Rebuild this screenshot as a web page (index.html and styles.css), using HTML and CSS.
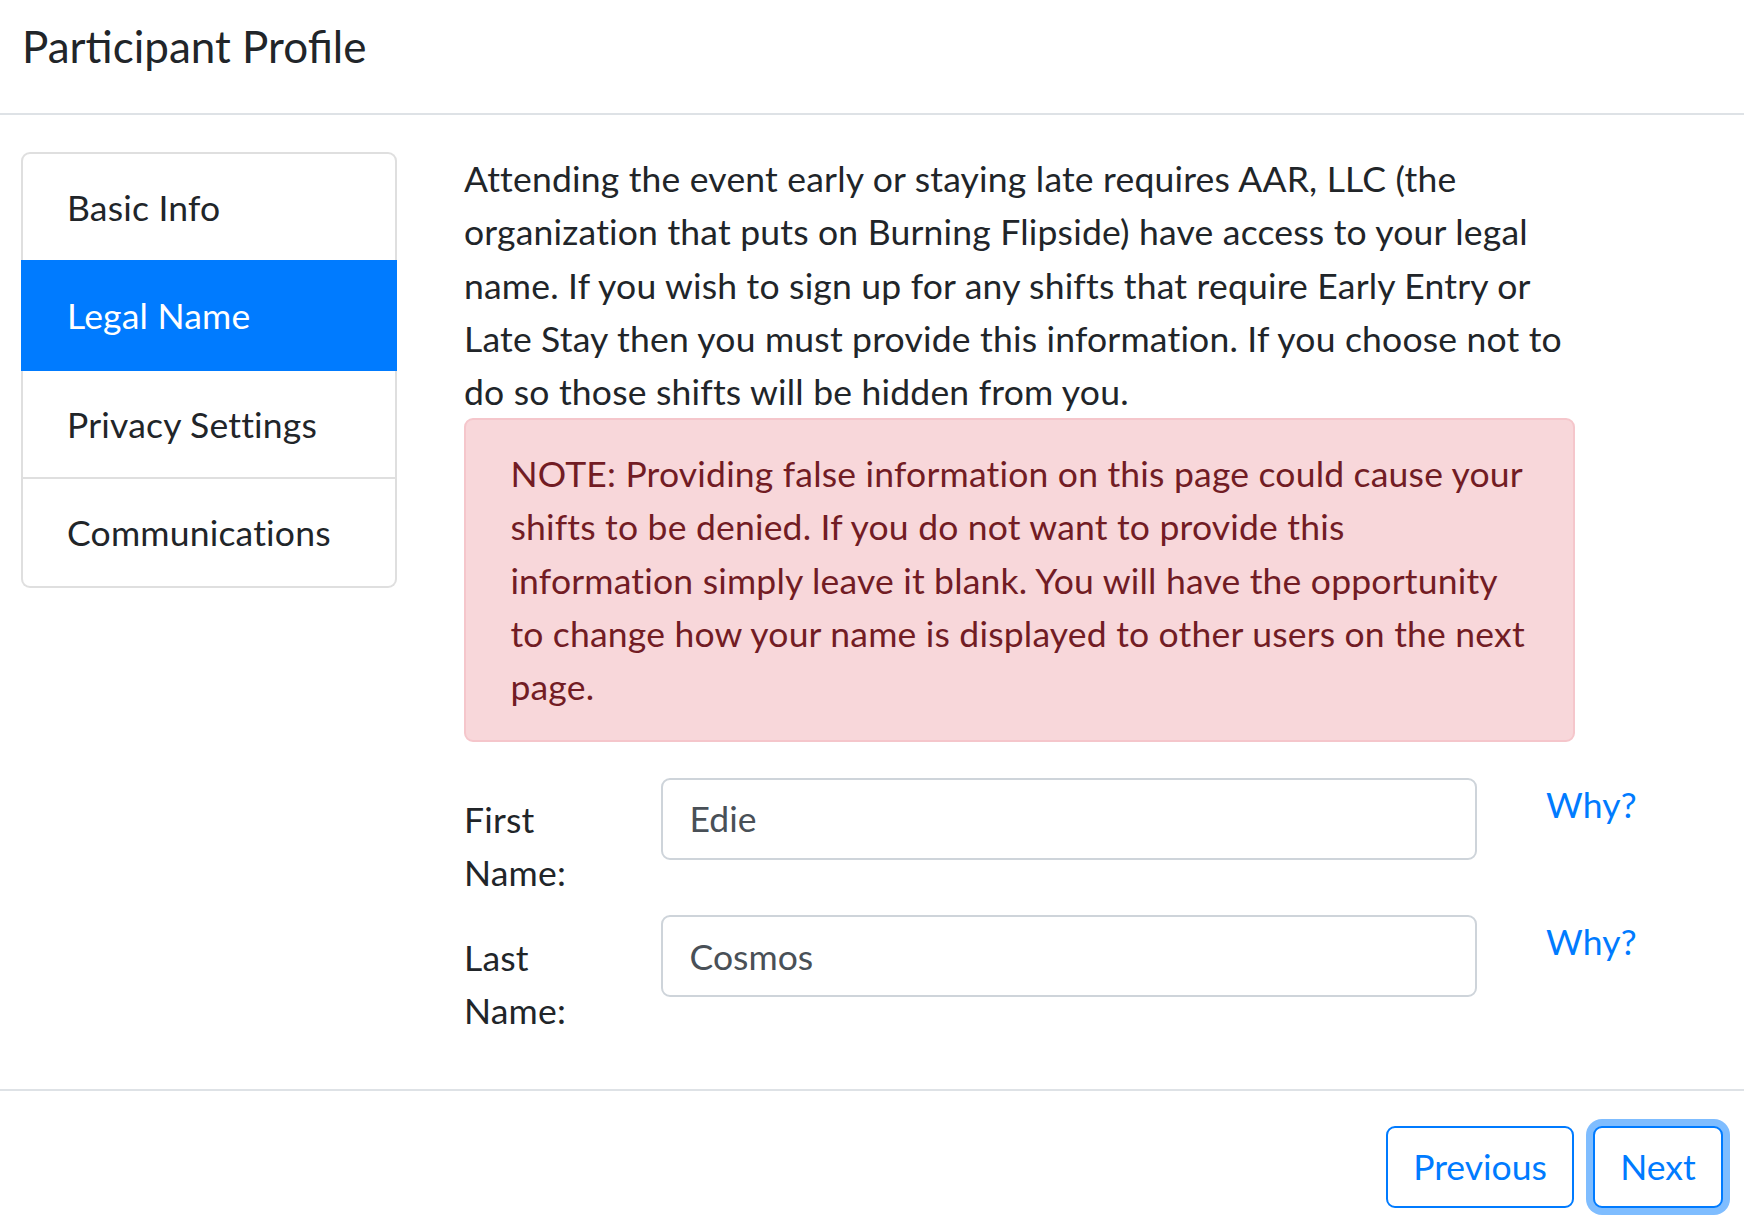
FILE: index.html
```html
<!DOCTYPE html>
<html lang="en">
<head>
<meta charset="utf-8">
<title>Participant Profile</title>
<link rel="stylesheet" href="styles.css">
</head>
<body>
<div class="dialog">
  <div class="dialog-header">
    <h5 class="dialog-title">Participant Profile</h5>
  </div>
  <div class="dialog-body">
    <div class="list-group">
      <a class="list-item">Basic Info</a>
      <a class="list-item active">Legal Name</a>
      <a class="list-item">Privacy Settings</a>
      <a class="list-item">Communications</a>
    </div>
    <div class="pane">
      <div class="intro">Attending the event early or staying late requires AAR, LLC (the organization that puts on Burning Flipside) have access to your legal name. If you wish to sign up for any shifts that require Early Entry or Late Stay then you must provide this information. If you choose not to do so those shifts will be hidden from you.</div>
      <div class="alert">NOTE: Providing false information on this page could cause your shifts to be denied. If you do not want to provide this information simply leave it blank. You will have the opportunity to change how your name is displayed to other users on the next page.</div>
      <div class="form">
        <div class="form-row">
          <label class="form-label" for="first">First Name:</label>
          <input class="form-input" id="first" type="text" value="Edie">
          <a class="why">Why?</a>
        </div>
        <div class="form-row">
          <label class="form-label" for="last">Last Name:</label>
          <input class="form-input" id="last" type="text" value="Cosmos">
          <a class="why">Why?</a>
        </div>
      </div>
    </div>
  </div>
  <div class="dialog-footer">
    <button class="btn btn-prev" type="button">Previous</button>
    <button class="btn btn-next" type="button">Next</button>
  </div>
</div>
</body>
</html>
```
FILE: styles.css
```css
* { box-sizing: border-box; }

html, body {
  margin: 0;
  padding: 0;
  background: #fff;
}

body {
  font-family: Lato, "Open Sans", sans-serif;
  font-size: 35.5px;
  line-height: 53.3px;
  letter-spacing: 0.2px;
  color: #212529;
  width: 1744px;
  height: 1230px;
  overflow: hidden;
}

.dialog-header {
  padding: 19px 22px 40px 22px;
  border-bottom: 2px solid #dee2e6;
}

.dialog-title {
  margin: 0;
  font-size: 44px;
  line-height: 54px;
  font-weight: 400;
  letter-spacing: 0;
}

.dialog-body {
  display: flex;
  align-items: flex-start;
  padding: 37px 0 0 21px;
}

.list-group {
  width: 376px;
  flex: none;
  display: flex;
  flex-direction: column;
  border-radius: 9px;
}

.list-item {
  display: block;
  padding: 26.6px 44px;
  border: 2px solid rgba(0, 0, 0, 0.125);
  border-top-width: 0;
  color: #212529;
  background: #fff;
}

.list-item:first-child {
  border-top-width: 2px;
  border-top-left-radius: 9px;
  border-top-right-radius: 9px;
}

.list-item:last-child {
  border-bottom-left-radius: 9px;
  border-bottom-right-radius: 9px;
}

.list-item.active {
  background: #007bff;
  border-color: #007bff;
  color: #fff;
  margin-top: -2px;
  border-top-width: 2px;
}

.pane {
  margin-left: 67px;
  width: 1200px;
}

.intro {
  width: 1111px;
}

.alert {
  width: 1111px;
  padding: 26.6px 39px 26.6px 44.4px;
  background: #f8d7da;
  border: 2px solid #f5c6cb;
  border-radius: 9px;
  color: #721c24;
  margin-bottom: 35.5px;
}

.form {
  padding-bottom: 36px;
}

.form-row {
  display: flex;
  align-items: flex-start;
}

.form-label {
  width: 197px;
  flex: none;
  padding: 15.5px 0;
  padding-right: 60px;
}

.form-input {
  width: 816px;
  height: 82px;
  flex: none;
  margin: 0;
  padding: 0 26.6px;
  border: 2px solid #ced4da;
  border-radius: 9px;
  font-family: inherit;
  font-size: 35.5px;
  color: #495057;
  background: #fff;
  outline: none;
}

.why {
  margin-left: 69px;
  color: #007bff;
}

.dialog-footer {
  border-top: 2px solid #dee2e6;
  display: flex;
  justify-content: flex-end;
  gap: 19px;
  padding: 35px 21px 0 0;
}

.btn {
  height: 82px;
  margin: 0;
  padding: 0;
  border: 2px solid #007bff;
  border-radius: 9px;
  background: #fff;
  color: #007bff;
  font-family: inherit;
  font-size: 35.5px;
  line-height: 53.3px;
}

.btn-prev { width: 188px; }

.btn-next {
  width: 130px;
  box-shadow: 0 0 0 7px rgba(0, 123, 255, 0.5);
}
```
